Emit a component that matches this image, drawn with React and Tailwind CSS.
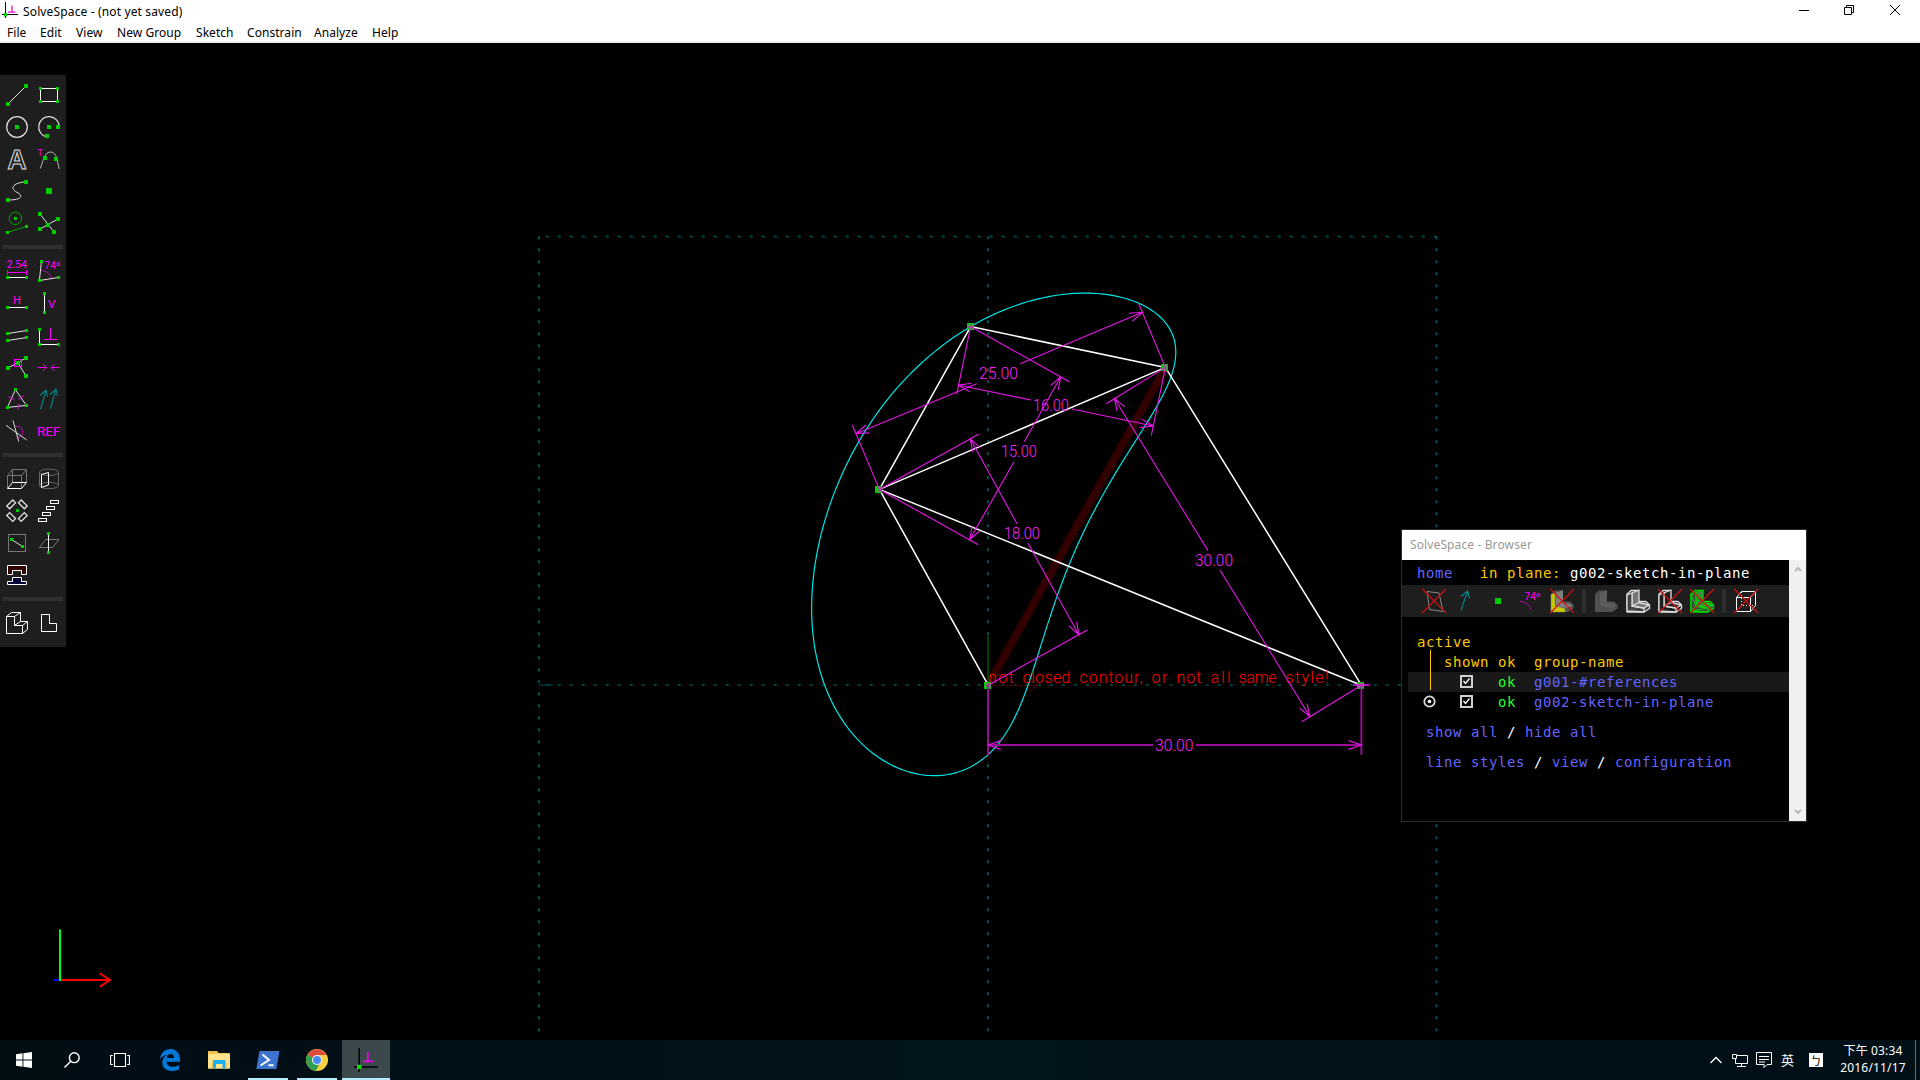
import React from "react";

const GREEN = "#00cc00";
const MAG = "#e815e8";

/* ---------- shared drawing helpers ---------- */

function Dot({ x, y, s = 4 }) {
  return <rect x={x - s / 2} y={y - s / 2} width={s} height={s} fill={GREEN} stroke="none" />;
}

function Icon({ children }) {
  return (
    <svg className="block h-8 w-8" viewBox="0 0 32 32" fill="none" stroke="#e0e0e0" strokeWidth="1">
      {children}
    </svg>
  );
}

function Glyph({ x, y, size, width, children }) {
  return (
    <text x={x} y={y} fontSize={size} textLength={width} lengthAdjust="spacingAndGlyphs" fill="#ff00ff" stroke="none" fontFamily="Roboto, sans-serif">
      {children}
    </text>
  );
}

/* ---------- left tool palette ---------- */

const sketchTools = [
  <Icon key="line"><path d="M7 25L25 7" /><Dot x={7} y={25} /><Dot x={25} y={7} /></Icon>,
  <Icon key="rect"><rect x="7.5" y="9.5" width="17" height="13" stroke="#fff" /><Dot x={7.5} y={9.5} s={3} /><Dot x={24.5} y={9.5} s={3} /><Dot x={7.5} y={22.5} s={3} /><Dot x={24.5} y={22.5} s={3} /></Icon>,
  <Icon key="circle"><circle cx="16" cy="16" r="10.3" strokeWidth="1.2" /><Dot x={16} y={16} /></Icon>,
  <Icon key="arc"><path d="M26.3 16A10.3 10.3 0 1 0 14 26.1" strokeWidth="1.2" /><Dot x={16} y={16} /><Dot x={25} y={16} /><Dot x={14} y={25} /></Icon>,
  <Icon key="text"><text x="6.5" y="26.3" fontSize="27" fontWeight="700" textLength="19" lengthAdjust="spacingAndGlyphs" fontFamily="Liberation Sans, sans-serif" strokeWidth="1">A</text></Icon>,
  <Icon key="tangent"><Glyph x={4.8} y={13} size={9} width={5}>T</Glyph><path d="M7.3 25.5C10 19 11 9 17.5 9C24 9 24 18 26.3 26" stroke="#b4b4b4" /><Dot x={12} y={15} /><Dot x={23} y={16} /></Icon>,
  <Icon key="spline"><path d="M25 7C16 7 10 11 12.5 14.5C15 18 20 18 19.8 21.5C19 24 14 25 7 25" /><Dot x={25} y={7} /><Dot x={7} y={25} /></Icon>,
  <Icon key="point"><Dot x={16} y={16} s={6} /></Icon>,
  <Icon key="construction"><g stroke="#00a400"><circle cx="14.4" cy="11.4" r="6.2" /><path d="M6.4 25.4L25.4 19.4" /></g><Dot x={14.4} y={11.4} s={3} /><Dot x={6.5} y={25.5} s={3} /><Dot x={25.5} y={19.5} s={3} /></Icon>,
  <Icon key="split"><path d="M7 7L21 25M7 22L25 12" /><Dot x={7} y={7} /><Dot x={25} y={12} /><Dot x={15} y={18} /><Dot x={7} y={22} /><Dot x={21} y={25} /></Icon>,
];

const constraintTools = [
  <Icon key="dist"><Glyph x={5.7} y={13} size={10} width={20.5}>2.54</Glyph><path d="M6.5 15V20M25.5 15V20M6.5 17.5H25.5" stroke="#e0e" /><path d="M6.5 22.5H25.5" stroke="#fff" /><Dot x={6.5} y={22.5} s={3} /><Dot x={25.5} y={22.5} s={3} /></Icon>,
  <Icon key="angle"><Glyph x={11.6} y={14} size={10} width={16}>74º</Glyph><path d="M8 15.5C13 15.5 18 19 18 23.5" stroke="#b010b0" /><path d="M8.4 6.5L6.4 25.5L25.4 22.5" /><Dot x={8.5} y={6.5} s={3} /><Dot x={6.5} y={25.5} s={3} /><Dot x={25.5} y={22.5} s={3} /></Icon>,
  <Icon key="horiz"><Glyph x={12} y={17} size={10} width={8}>H</Glyph><path d="M6.5 20.5H25.5" stroke="#fff" /><Dot x={6.5} y={20.5} s={3} /><Dot x={25.5} y={20.5} s={3} /></Icon>,
  <Icon key="vert"><Glyph x={15} y={20.5} size={10.5} width={7.5}>V</Glyph><path d="M11.5 6.5V25.5" stroke="#fff" /><Dot x={11.5} y={6.5} s={3} /><Dot x={11.5} y={25.5} s={3} /></Icon>,
  <Icon key="parallel"><path d="M6.5 14.5L25.5 11.6M6.5 21.5L25.5 18.6" /><Dot x={6.5} y={14.5} s={3} /><Dot x={25.5} y={11.5} s={3} /><Dot x={6.5} y={21.5} s={3} /><Dot x={25.5} y={18.5} s={3} /></Icon>,
  <Icon key="perp"><path d="M11 20.5H24M17.5 9V20.5" stroke="#f0f" /><path d="M6.5 10.5V25.5H25.5" stroke="#fff" /><Dot x={6.5} y={10.5} s={3} /><Dot x={6.5} y={25.5} s={3} /><Dot x={25.5} y={25.5} s={3} /></Icon>,
  <Icon key="pointon"><path d="M7 17L25 7M17 12L25 25" /><rect x="13.5" y="8.5" width="7" height="7" stroke="#f0f" /><Dot x={17} y={12} /><Dot x={25} y={7} /><Dot x={7} y={17} /><Dot x={25} y={25} /></Icon>,
  <Icon key="symmetric"><path d="M4.5 16.5H13.5M10 13L13.5 16.5L10 20M27 16.5H18M21.5 13L18 16.5L21.5 20" stroke="#e0e" /></Icon>,
  <Icon key="equal"><path d="M14.4 6.7L6.4 24.4L25.4 22.4Z" /><path d="M7.5 13.8L13.5 17M17.5 16.5L23 12.5M17 20.5V26.5" stroke="#e0e" /><Dot x={14.5} y={6.5} s={3} /><Dot x={6.5} y={24.5} s={3} /><Dot x={25.5} y={22.5} s={3} /></Icon>,
  <Icon key="orient"><path d="M7.5 26.5L13 7M7 12.5L13 7L14.5 14M17.5 25.5L23 6M17 11.5L23 6L24.5 13" stroke="#008484" strokeWidth="1.1" /></Icon>,
  <Icon key="other"><path d="M14.5 11.5C20 10 22.5 15 21.5 19C20 22 17.5 23 15.5 23" stroke="#b010b0" /><path d="M5 10.3L25.7 25M12 5.5L17.7 26.5" stroke="#d8d8d8" /></Icon>,
  <Icon key="ref"><Glyph x={4} y={21} size={12.3} width={23.5}>REF</Glyph></Icon>,
];

const groupTools = [
  <Icon key="extrude"><g stroke="#777"><path d="M6.5 25V12.5H20.5V25M6.5 12.5L11.5 6.5H25.5L20.5 12.5M25.5 6.5V19.5M11.5 6.5V19.5" /></g><path d="M6.5 25.5L11.5 19.5H25.5L20.5 25.5Z" stroke="#fff" /></Icon>,
  <Icon key="lathe"><g stroke="#666"><ellipse cx="16" cy="9.3" rx="9.5" ry="3.2" /><ellipse cx="16" cy="22.5" rx="9.5" ry="3.2" /><path d="M6.5 9.5V22.5M25.5 9.5V22.5" /></g><path d="M8.5 11.5L15.5 9.5V22L8.5 24.5Z" stroke="#fff" /></Icon>,
  <Icon key="rotate"><g strokeWidth="1.3"><rect x="6" y="7.4" width="8.4" height="4" transform="rotate(-45 10.2 9.4)" /><rect x="17.6" y="7.4" width="8.4" height="4" transform="rotate(45 21.8 9.4)" /><rect x="6" y="20" width="8.4" height="4" transform="rotate(45 10.2 22)" /><rect x="17.6" y="20" width="8.4" height="4" transform="rotate(-45 21.8 22)" /></g><Dot x={16.5} y={15.5} s={3} /></Icon>,
  <Icon key="translate"><g stroke="#fff"><rect x="17.5" y="5.5" width="8" height="3" /><rect x="13.5" y="11.5" width="8" height="3" /><rect x="9.5" y="17.5" width="8" height="3" /><rect x="5.5" y="23.5" width="8" height="3" /></g></Icon>,
  <Icon key="inplane"><rect x="7.5" y="7.5" width="17" height="17" stroke="#777" /><path d="M10.5 12.5L21.5 19.5" /><Dot x={10.5} y={12.5} s={3} /><Dot x={21.5} y={19.5} s={3} /></Icon>,
  <Icon key="in3d"><path d="M6.3 20.5L12.7 12.5H26L19.5 20.5Z" stroke="#777" /><path d="M15.5 6.5V25.5" stroke="#fff" /><Dot x={15.5} y={6.5} s={3} /><Dot x={15.5} y={25.5} s={3} /></Icon>,
  <Icon key="assembly"><path d="M6.5 6.5H25.5V15.5H20.5V11.5H11.5V15.5H6.5Z" fill="#300" stroke="#fff" /><path d="M11.5 18.5H20.5V22.5H25.5V25.5H6.5V22.5H11.5Z" fill="#003" stroke="#fff" /></Icon>,
  <span key="blank" />,
];

const viewTools = [
  <Icon key="iso"><path d="M5.5 9.5H13.5V18.5H21.5V26.5H5.5ZM5.5 9.5L10.5 5.5H19.5L13.5 9.5M19.5 5.5V14.5L13.5 18.5M19.5 14.5H26.5L21.5 18.5M26.5 14.5V22.5L21.5 26.5" stroke="#fff" /></Icon>,
  <Icon key="ortho"><path d="M8.5 7.5H16.5V16.5H23.5V24.5H8.5Z" stroke="#fff" /></Icon>,
];

function Palette() {
  const groups = [sketchTools, constraintTools, groupTools, viewTools];
  return (
    <div className="absolute left-0 top-8 flex h-[572px] w-[66px] flex-col bg-[#1e1e1e] px-px pt-1">
      {groups.map((tools, i) => (
        <React.Fragment key={i}>
          {i > 0 && <div className="mx-0.5 my-1.5 h-1 bg-[#2e2e2e]" />}
          <div className="grid grid-cols-2">{tools}</div>
        </React.Fragment>
      ))}
    </div>
  );
}

/* ---------- linkage sketch ---------- */

const U = 12.444;
const O = [988.2, 685.2];
const F = [1361.4, 685.2];
const A = [879.4, 489.4];
const B = [970.6, 326.6];
const C = [1165.4, 367.4];

/* Path of coupler point B while crank OA makes one turn. */
function couplerPath() {
  const offset = Math.atan2(A[1] - B[1], B[0] - A[0]) - Math.atan2(A[1] - C[1], C[0] - A[0]);
  const pts = [];
  for (let i = 0; i < 360; i++) {
    const t = (i * Math.PI) / 180;
    const ax = O[0] + 18 * U * Math.cos(t);
    const ay = O[1] - 18 * U * Math.sin(t);
    const d = Math.hypot(F[0] - ax, F[1] - ay);
    const l = 25 * U;
    const r = 30 * U;
    const a = Math.acos((l * l + d * d - r * r) / (2 * l * d)) + Math.atan2(ay - F[1], F[0] - ax) + offset;
    pts.push(`${(ax + 15 * U * Math.cos(a)).toFixed(2)} ${(ay - 15 * U * Math.sin(a)).toFixed(2)}`);
  }
  return `M${pts.join("L")}Z`;
}

function arrow([x, y], [fx, fy]) {
  const a = Math.atan2(fy - y, fx - x);
  const p = (s) => `${x + 13.5 * Math.cos(a + s)} ${y + 13.5 * Math.sin(a + s)}`;
  return `M${p(0.33)}L${x} ${y}L${p(-0.33)}`;
}

const dims = [
  { t: "25.00", tx: 979, ty: 379, w: 39, e: [[A, [852.3, 425]], [C, [1138.7, 303.7]]], l: [[[856, 433.7], [976.7, 383.7]], [[1142.3, 312.3], [1020.3, 363.7]]] },
  { t: "16.00", tx: 1033, ty: 410.5, w: 36, e: [[B, [956.7, 394.3]], [C, [1151.3, 435.3]]], l: [[[958.3, 385], [1031, 400]], [[1153.3, 426], [1072, 409]]] },
  { t: "15.00", tx: 1001, ty: 457, w: 36, e: [[B, [1069.3, 381.7]], [A, [978.3, 544.7]]], l: [[[1060.7, 376.7], [1024.3, 441.7]], [[969.7, 539.7], [1014, 461.7]]] },
  { t: "18.00", tx: 1004, ty: 539, w: 36, e: [[A, [979, 434]], [O, [1087.3, 630]]], l: [[[970.3, 438.7], [1017, 523.7]], [[1079, 635], [1028, 543.3]]] },
  { t: "30.00", tx: 1195, ty: 566, w: 38, e: [[C, [1106.3, 403.7]], [F, [1301.7, 721.7]]], l: [[[1114.3, 398.3], [1208, 550.7]], [[1310, 716.7], [1220, 570]]] },
];

const seg = ([p, q]) => `M${p[0]} ${p[1]}L${q[0]} ${q[1]}`;

const warning = [
  ["not", 988, 26],
  ["closed", 1022.5, 48],
  ["contour,", 1079.5, 63],
  ["or", 1151.5, 16],
  ["not", 1176.5, 25],
  ["all", 1210.5, 20],
  ["same", 1238.5, 38],
  ["style!", 1285.5, 43],
];

function Sketch() {
  return (
    <svg className="block h-full w-full" viewBox="0 43 1920 997" fill="none">
      <g stroke="#006060" strokeWidth="1.7" strokeDasharray="3 9">
        <path d="M539 236.3V1040M988 236.3V1040M1436.5 236.3V1040" />
        <path d="M545.8 236.7H1436M545.8 685H1436" strokeOpacity="0.85" />
      </g>
      <path d="M539 685H553" stroke="#005252" />
      <path d={seg([O, C])} stroke="#330000" strokeWidth="8" />
      <path d="M988 685V636" stroke="#004000" strokeWidth="2" />
      <path d="M988 685.3H1038M1028 679L1038 685.3L1028 691.5" stroke="#4a0000" />
      <path d={couplerPath()} stroke="#00e6e6" strokeWidth="1.2" />
      <path d={[[O, A], [A, B], [B, C], [C, A], [C, F], [A, F]].map(seg).join("")} stroke="#fff" strokeWidth="1.5" />
      <g fill="#f00" fontSize="16" fontWeight="300" fontFamily="Roboto, sans-serif">
        <text y="683.3">
          {warning.map(([w, x, len]) => (
            <tspan key={x} x={x} textLength={len} lengthAdjust="spacing">{w}</tspan>
          ))}
        </text>
      </g>
      {[O, F, A, B, C].map(([x, y]) => (
        <rect key={`${x}${y}`} x={Math.round(x - 4)} y={Math.round(y - 3.4)} width="7" height="7" fill={GREEN} />
      ))}
      <g stroke={MAG} strokeWidth="1.1">
        {dims.map((d, i) => (
          <path key={i} d={d.e.map(seg).join("") + d.l.map((s) => seg(s) + arrow(s[0], s[1])).join("")} />
        ))}
        <path d="M988 745H1153M1196 745H1361.4M988 685V755M1361.4 685V755" stroke="#990d99" strokeWidth="1.9" />
        <path d={arrow([988, 745], [1153, 745]) + arrow([1361.4, 745], [1196, 745])} />
        <path d="M1353 685H1369.5" strokeWidth="1.6" />
      </g>
      {[O, A, B, C, F].map(([x, y]) => (
        <circle key={`${x}-${y}`} cx={x} cy={y} r="2" stroke="#b04ab0" />
      ))}
      <g fill="#ff20ff" fontSize="17" fontWeight="300" fontFamily="Roboto, sans-serif">
        {dims.map((d) => (
          <text key={d.t + d.tx} x={d.tx} y={d.ty} textLength={d.w} lengthAdjust="spacingAndGlyphs">{d.t}</text>
        ))}
        <text x="1155" y="751" textLength="38.5" lengthAdjust="spacingAndGlyphs">30.00</text>
      </g>
      <g strokeWidth="2">
        <path d="M53 980H60" stroke="#00f" />
        <path d="M60 980H110M100 973.5L110 980L100 986.7" stroke="#f00" />
        <path d="M60 981V929.5" stroke="#0f0" />
      </g>
    </svg>
  );
}

/* ---------- browser window ---------- */

const Cross = () => <path d="M4.3 4L28 28M28 4L4.3 28" stroke="#d01010" strokeWidth="1.15" />;

function Solid({ face, side, line, mesh }) {
  return (
    <g stroke={line || "none"} strokeWidth="1.3" strokeLinejoin="round">
      <path d="M5 9L9 5.5H16V16.5L24 16.5L27.5 20V23.5L22 27H5Z" fill={side} />
      <path d="M10 8L17 5V18L10 21Z" fill={face} />
      <path d="M5 10L10 8V21L22 23V27L5 26Z" fill={side} />
      <path d="M10 21L17 17.5L27 20L22 23Z" fill={face} />
      {mesh && <path d="M10 8L17 18M17 5L10 21M5 10L10 21L5 26M5 26L22 23M10 21L27 20M27 24L22 23L17 18" strokeWidth="0.9" />}
    </g>
  );
}

const Bar = () => <div className="mx-1 h-6 w-1 bg-[#2e2e2e]" />;
const Blue = ({ children }) => <span className="text-[#6464ff]">{children}</span>;
const Amber = ({ children }) => <span className="text-[#ffc800]">{children}</span>;

function Check() {
  return (
    <svg className="-mt-px h-[13px] w-[13px]" viewBox="0 0 13 13" fill="none" stroke="#d0d0d0">
      <rect x="1" y="1" width="11" height="11" strokeWidth="2" />
      <path d="M3.5 6L5.5 8.5L9.5 3.5" stroke="#fff" strokeWidth="1.3" />
    </svg>
  );
}

function GroupRow({ name, active, lit }) {
  return (
    <div className={`ml-1.5 flex h-5 items-center pl-2 ${lit ? "bg-[#191919]" : ""}`}>
      <span className="ml-[7px] flex w-[37px]">
        {active && (
          <svg className="-mt-px h-[13px] w-[13px]" viewBox="0 0 13 13" fill="none">
            <circle cx="6.5" cy="6.5" r="5.2" stroke="#d8d8d8" strokeWidth="1.8" />
            <circle cx="6.5" cy="6.5" r="1.8" fill="#fff" />
          </svg>
        )}
      </span>
      <Check />
      <span className="ml-[25px] w-9 text-[#28ff28]">ok</span>
      <Blue>{name}</Blue>
    </div>
  );
}

function BrowserWindow() {
  return (
    <div className="absolute left-[1401px] top-[486px] flex h-[293px] w-[406px] flex-col border border-[#2c2c2c] bg-black">
      <div className="flex h-[30px] shrink-0 items-center bg-white pl-2 font-['Noto_Sans'] text-[12px] tracking-[0.12px] text-[#999]">SolveSpace - Browser</div>
      <div className="flex flex-1">
        <div className="flex w-[387px] flex-col whitespace-pre font-['DejaVu_Sans_Mono',monospace] text-[14px] leading-5 tracking-[0.572px]">
          <div className="h-[25px] pl-[15px] pt-[3px] text-white">
            <Blue>home</Blue>   <Amber>in plane:</Amber> g002-sketch-in-plane
          </div>
          <div className="flex h-8 items-center bg-[#1e1e1e] pl-4 tracking-normal">
            <Icon><path d="M9 6.5L21 8L25 26.5L11.5 24.5Z" stroke="#888" /><Cross /></Icon>
            <Icon><path d="M11 25.5L17.5 6M11 11.5L17.5 6L19.5 13.5" stroke="#008484" strokeWidth="1.2" /></Icon>
            <Icon><Dot x={16} y={16} s={6} /></Icon>
            <Icon><Glyph x={10.5} y={14.5} size={10} width={16}>74º</Glyph><path d="M6 16.5C11 16.5 16 20 16.5 24.5" stroke="#b010b0" /></Icon>
            <Icon><Solid face="#808080" side="#555" /><path d="M5 9.5L9 8V21L19 23.5V27L5 27Z" fill="#c8c800" stroke="#888" strokeDasharray="1 1" strokeWidth="1" /><Cross /></Icon>
            <Bar />
            <Icon><Solid face="#5c5c5c" side="#505050" /></Icon>
            <Icon><Solid face="#777" side="#444" line="#ddd" /></Icon>
            <Icon><Solid face="#1e1e1e" side="#1e1e1e" line="#ddd" /><Cross /></Icon>
            <Icon><Solid face="#5a6e5a" side="#3c503c" line="#00d200" mesh /><Cross /></Icon>
            <Bar />
            <Icon><path d="M6.5 12.5H20.5V26.5H6.5ZM6.5 12.5L11.5 6.5H25.5L20.5 12.5M25.5 6.5V20.5L20.5 26.5" stroke="#fff" /><path d="M11.5 7V20.5H25M11.5 20.5L7 26" stroke="#fff" strokeDasharray="1 2" /><Cross /></Icon>
          </div>
          <div className="relative mt-[15px]">
            <div className="pl-[15px]"><Amber>active</Amber></div>
            <div className="pl-[15px]"><Amber>   shown ok  group-name</Amber></div>
            <GroupRow name="g001-#references" lit />
            <GroupRow name="g002-sketch-in-plane" active />
            <div className="absolute left-7 top-[18px] h-10 w-px bg-[#ffc800]" />
          </div>
          <div className="mt-2.5 pl-6 text-white"><Blue>show all</Blue> / <Blue>hide all</Blue></div>
          <div className="mt-2.5 pl-6 text-white"><Blue>line styles</Blue> / <Blue>view</Blue> / <Blue>configuration</Blue></div>
        </div>
        <div className="flex flex-1 flex-col items-center justify-between bg-[#f0f0f0] py-1.5">
          <svg className="h-[7px] w-2" viewBox="0 0 8 7" fill="none" stroke="#b8b8b8" strokeWidth="2"><path d="M1 5L4 2L7 5" /></svg>
          <svg className="h-[7px] w-2" viewBox="0 0 8 7" fill="none" stroke="#b8b8b8" strokeWidth="2"><path d="M1 2L4 5L7 2" /></svg>
        </div>
      </div>
    </div>
  );
}

/* ---------- title bar, menu ---------- */

function Header() {
  return (
    <header className="flex h-[43px] shrink-0 flex-col border-b-2 border-[#f0f0f0] bg-white font-['Noto_Sans'] text-[12px] text-black">
      <div className="flex h-[23px] items-center">
        <svg className="-mt-1 ml-0.5 h-4 w-4" viewBox="0 0 16 16" fill="none">
          <path d="M3.5 0V16M0 12.5H16" stroke="#000" />
          <path d="M10 3.5V10M6 10.2H13.5" stroke="#e010d0" strokeWidth="1.3" />
          <rect x="2" y="11" width="3.4" height="3.4" fill="#0d0" />
        </svg>
        <span className="ml-[5px] tracking-[0.14px]">SolveSpace - (not yet saved)</span>
        <div className="-mt-1 ml-auto flex items-center">
          <svg className="h-5 w-[140px]" viewBox="1780 0 140 20" fill="none" stroke="#000">
            <path d="M1799 10.5H1809" />
            <path d="M1844.5 7.5H1851.5V14.5H1844.5ZM1846.5 7V5.5H1853.5V12.5H1852" />
            <path d="M1890 5L1900 15M1900 5L1890 15" />
          </svg>
        </div>
      </div>
      <nav className="flex h-[18px] items-center pl-[7px] pt-0.5 leading-[16px] tracking-[0.05px]">
        <span className="w-[33px]">File</span>
        <span className="w-9">Edit</span>
        <span className="w-[41px]">View</span>
        <span className="w-[79px]">New Group</span>
        <span className="w-[51px]">Sketch</span>
        <span className="w-[67px]">Constrain</span>
        <span className="w-[58px]">Analyze</span>
        <span>Help</span>
      </nav>
    </header>
  );
}

/* ---------- taskbar ---------- */

function Task({ children, running, active }) {
  return (
    <div className={`relative flex h-10 w-12 items-center justify-center ${active ? "bg-[#3b494d]" : ""}`}>
      {children}
      {running && <div className={`absolute bottom-0 h-0.5 bg-[#b4ebfd] ${active ? "w-12" : "w-10"}`} />}
    </div>
  );
}

function Taskbar() {
  return (
    <footer className="flex h-10 shrink-0 items-center bg-linear-to-r from-[#010c13] via-[#02141c] to-[#010f17] text-white">
      <Task>
        <svg className="h-4 w-4" viewBox="0 0 16 16" fill="#fff"><path d="M0 2.3L6.5 1.3V7.5H0ZM7.4 1.2L16 0V7.5H7.4ZM0 8.4H6.5V14.7L0 13.7ZM7.4 8.4H16V16L7.4 14.8Z" /></svg>
      </Task>
      <Task>
        <svg className="h-4 w-4" viewBox="0 0 16 16" fill="none" stroke="#fff" strokeWidth="1.4"><circle cx="10.3" cy="5.7" r="4.9" /><path d="M6.8 9.2L0.5 15.5" /></svg>
      </Task>
      <Task>
        <svg className="h-4 w-5" viewBox="0 0 20 16" fill="none" stroke="#fff" strokeWidth="1.1"><path d="M4.5 1.5H15.5V14.5H4.5ZM2.8 3.5H0.6V12.5H2.8M17.2 3.5H19.4V12.5H17.2" /></svg>
      </Task>
      <div className="ml-0.5 flex gap-px">
        <Task>
          <svg className="h-[22px] w-5" viewBox="0 0 20 22" fill="#0078d7"><path d="M0 10C.8 3.8 5 0 10.3 0C16.5 0 20 4.4 20 10.2V12.8H6.6C6.8 16.3 9.4 17.8 12.4 17.8C15 17.8 17.2 17 19 15.9V20.2C17 21.4 14.6 22 11.8 22C5.8 22 2.3 18.4 2.3 13.5C2.3 10 4.3 7.2 7.3 5.8C4 6.1 1.5 7.8 0 10ZM6.8 8.9H14C14 6.5 12.9 5 10.6 5C8.5 5 7.1 6.6 6.8 8.9Z" /></svg>
        </Task>
        <Task>
          <svg className="h-[18px] w-[22px]" viewBox="0 0 22 18"><path d="M0 0H9L10.5 2H21.5V17.5H0Z" fill="#f5c64f" /><path d="M0 3H22V17.5H0Z" fill="#ffe28c" /><path d="M2 .8H7" stroke="#e8a33d" /><path d="M5 9H17.5V17.5H14.5V13H8V17.5H5Z" fill="#1cb0f0" /><path d="M3.5 17.5V11.5H5V17.5ZM17.5 17.5V11.5H19V17.5Z" fill="#f5c64f" /></svg>
        </Task>
        <Task running>
          <svg className="h-[18px] w-6" viewBox="0 0 24 18" fill="none"><path d="M3.5 0H23.5L20.3 18H.3Z" fill="#3c74cf" /><path d="M6.5 3.5L13 9L4.5 14.5M12.5 14.3H17.5" stroke="#fff" strokeWidth="2" /></svg>
        </Task>
        <Task running>
          <svg className="h-[22px] w-[22px]" viewBox="0 0 22 22">
            <circle cx="11" cy="11" r="11" fill="#f9cf46" />
            <path d="M11 11L1.5 5.5A11 11 0 0 0 9.6 21.9L13 16Z" fill="#2f9e50" />
            <path d="M11 11L1.5 5.5A11 11 0 0 1 20.5 6H11Z" fill="#dd4b3e" />
            <circle cx="11" cy="11" r="5" fill="#f4f4f4" /><circle cx="11" cy="11" r="4" fill="#4a8af4" />
          </svg>
        </Task>
        <Task running active>
          <svg className="h-6 w-6" viewBox="0 0 24 24" fill="none"><path d="M5.2 0V24M0 19H24" stroke="#000" strokeWidth="1.5" /><path d="M13.8 4V13M9 13.3H19" stroke="#f000e8" strokeWidth="1.8" /><rect x="3" y="16.7" width="4.4" height="4.4" fill="#16d800" /></svg>
        </Task>
      </div>
      <div className="ml-auto flex h-10 items-center font-['Noto_Sans','Noto_Sans_CJK_TC',sans-serif] text-[12px]">
        <svg className="h-2 w-3" viewBox="0 0 12 8" fill="none" stroke="#fff" strokeWidth="1.3"><path d="M.5 7L6 1.5L11.5 7" /></svg>
        <svg className="ml-2.5 h-4 w-4" viewBox="0 0 16 16" fill="none" stroke="#fff"><path d="M5 3.5H15.5V11.5H3.5V7M.5 2.5H4.5V6.5H.5ZM9.5 11.5V14.5M5 14.5H14" /></svg>
        <svg className="ml-2 h-4 w-4" viewBox="0 0 16 16" fill="none" stroke="#fff"><path d="M.5 .5H15.5V12.5H11L8 15.5V12.5H.5ZM3 4.5H13M3 7.5H13M3 10H9" /></svg>
        <span className="ml-[9px] w-3.5 text-[13px] leading-5">英</span>
        <span className="ml-3.5 flex h-3.5 w-3.5 items-center justify-center bg-white font-['Noto_Sans_CJK_TC'] text-[11px] leading-none text-black">ㄅ</span>
        <div className="-mt-0.5 ml-3.5 mr-0.5 flex w-[72px] flex-col items-center text-[12px] leading-[17px] tracking-[0.15px]">
          <span>下午 03:34</span>
          <span>2016/11/17</span>
        </div>
        <div className="ml-1 mr-1 h-10 w-px bg-[#5a666b]" />
      </div>
    </footer>
  );
}

export default function App() {
  return (
    <div className="flex h-[1080px] w-[1920px] flex-col overflow-hidden bg-black">
      <Header />
      <main className="relative h-[997px] bg-black">
        <Sketch />
        <Palette />
        <BrowserWindow />
      </main>
      <Taskbar />
    </div>
  );
}
